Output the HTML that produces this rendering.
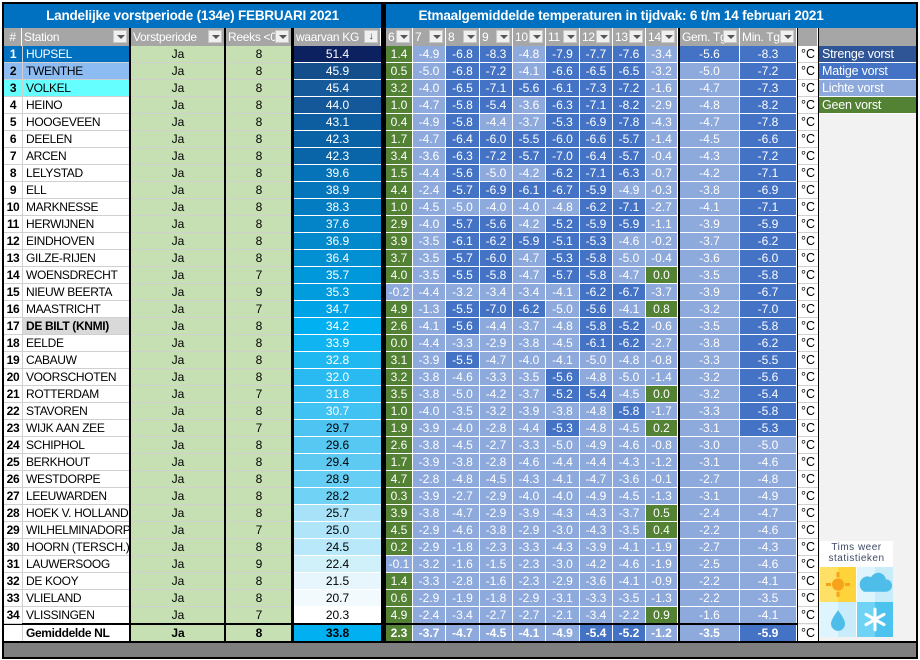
<!DOCTYPE html>
<html><head><meta charset="utf-8">
<style>
*{margin:0;padding:0;box-sizing:border-box}
body{width:920px;height:660px;background:#fff;position:relative;overflow:hidden;font-family:"Liberation Sans",Arial,sans-serif;font-size:12px}
.c{position:absolute;height:17px;line-height:16px;white-space:nowrap;overflow:hidden}
.h{position:absolute;top:28px;height:18px;line-height:18px;background:#a6a6a6;color:#fff;font-size:12px;letter-spacing:-0.3px;padding-left:2px;border-right:1px solid #fff;overflow:hidden;white-space:nowrap}
.dd{position:absolute;top:2px;right:2px;width:14px;height:13px;background:#f0f0f0;border:1px solid #c8c8c8}
.dd:after{content:"";position:absolute;left:3px;top:4px;border-left:4px solid transparent;border-right:4px solid transparent;border-top:4px solid #555}
</style></head><body>
<div style="position:absolute;left:2px;top:2px;width:916px;height:657px;border:2px solid #000;background:#000"></div>
<div style="position:absolute;left:4px;top:4px;width:377px;height:24px;background:#0070c0;color:#fff;font-weight:bold;font-size:13.5px;letter-spacing:-0.2px;text-align:center;line-height:24px">Landelijke vorstperiode (134e) FEBRUARI 2021</div>
<div style="position:absolute;left:386px;top:4px;width:530px;height:24px;background:#0070c0;color:#fff;font-weight:bold;font-size:13.5px;letter-spacing:-0.2px;text-align:center;line-height:24px;padding-right:60px">Etmaalgemiddelde temperaturen in tijdvak: 6 t/m 14 februari 2021</div>
<div style="position:absolute;left:798px;top:46px;width:118px;height:597px;background:#f2f2f2"></div>
<div style="position:absolute;left:4px;top:643px;width:912px;height:14px;background:#7f7f7f"></div>
<div id="g"></div>
<div style="position:absolute;left:820px;top:541px;width:73px;height:96px;background:#fff">
 <div style="color:#3d4a66;font-size:10px;line-height:11px;text-align:center;letter-spacing:0.5px;padding-top:1px">Tims weer<br>statistieken</div>
 <svg width="73" height="70" style="position:absolute;left:0;top:26px" viewBox="0 0 73 68" preserveAspectRatio="none">
  <rect x="0" y="0" width="36" height="34" fill="#ffe066"/><rect x="18" y="0" width="18" height="34" fill="#ffd43a"/>
  <g fill="#f7a21b"><circle cx="18" cy="17" r="6"/><rect x="16.5" y="5" width="3" height="5"/><rect x="16.5" y="24" width="3" height="5"/><rect x="6" y="15.5" width="5" height="3"/><rect x="25" y="15.5" width="5" height="3"/></g>
  <rect x="37" y="0" width="36" height="34" fill="#dff5fd"/><rect x="55" y="0" width="18" height="34" fill="#c9ecfb"/>
  <path d="M44 24 h22 a6 6 0 0 0 0-12 a8 8 0 0 0-15-2 a6 6 0 0 0-7 14z" fill="#4ebde9"/>
  <rect x="0" y="34" width="36" height="34" fill="#dff5fd"/><rect x="18" y="34" width="18" height="34" fill="#c9ecfb"/>
  <path d="M18 42 q-7 9-7 13 a7 7 0 0 0 14 0 q0-4-7-13z" fill="#4ebde9"/>
  <rect x="37" y="34" width="36" height="34" fill="#6ed3f5"/><rect x="55" y="34" width="18" height="34" fill="#4cc3ee"/>
  <g stroke="#fff" stroke-width="3" stroke-linecap="round"><line x1="55" y1="41" x2="55" y2="61"/><line x1="46" y1="46" x2="64" y2="56"/><line x1="46" y1="56" x2="64" y2="46"/></g>
 </svg>
</div>
<script>
var st=["HUPSEL","TWENTHE","VOLKEL","HEINO","HOOGEVEEN","DEELEN","ARCEN","LELYSTAD","ELL","MARKNESSE","HERWIJNEN","EINDHOVEN","GILZE-RIJEN","WOENSDRECHT","NIEUW BEERTA","MAASTRICHT","DE BILT (KNMI)","EELDE","CABAUW","VOORSCHOTEN","ROTTERDAM","STAVOREN","WIJK AAN ZEE","SCHIPHOL","BERKHOUT","WESTDORPE","LEEUWARDEN","HOEK V. HOLLAND","WILHELMINADORP","HOORN (TERSCH.)","LAUWERSOOG","DE KOOY","VLIELAND","VLISSINGEN"];
var rk=[8,8,8,8,8,8,8,8,8,8,8,8,8,7,9,7,8,8,8,8,7,8,7,8,8,8,8,8,7,8,9,8,8,7];
var kg=["51.4","45.9","45.4","44.0","43.1","42.3","42.3","39.6","38.9","38.3","37.6","36.9","36.4","35.7","35.3","34.7","34.2","33.9","32.8","32.0","31.8","30.7","29.7","29.6","29.4","28.9","28.2","25.7","25.0","24.5","22.4","21.5","20.7","20.3"];
var kc=["#0c2260","#144f8c","#155a9a","#14589a","#0c5ea0","#0a62a6","#0a64a8","#0672b8","#0676bc","#047cc2","#0484c8","#0289cc","#0290d2","#0098da","#009cde","#00a4e6","#00b0f0","#10b4f0","#20b8f0","#28baf0","#30bcf0","#40c2f2","#4ec4f2","#56c8f2","#5ecaf2","#66cef4","#70d2f4","#a8e2f8","#b0e4f8","#b8e8fa","#d0f0fa","#e6f6fc","#f2fafe","#ffffff"];
var T=`1.4 -4.9 -6.8 -8.3 -4.8 -7.9 -7.7 -7.6 -3.4 -5.6 -8.3
0.5 -5.0 -6.8 -7.2 -4.1 -6.6 -6.5 -6.5 -3.2 -5.0 -7.2
3.2 -4.0 -6.5 -7.1 -5.6 -6.1 -7.3 -7.2 -1.6 -4.7 -7.3
1.0 -4.7 -5.8 -5.4 -3.6 -6.3 -7.1 -8.2 -2.9 -4.8 -8.2
0.4 -4.9 -5.8 -4.4 -3.7 -5.3 -6.9 -7.8 -4.3 -4.7 -7.8
1.7 -4.7 -6.4 -6.0 -5.5 -6.0 -6.6 -5.7 -1.4 -4.5 -6.6
3.4 -3.6 -6.3 -7.2 -5.7 -7.0 -6.4 -5.7 -0.4 -4.3 -7.2
1.5 -4.4 -5.6 -5.0 -4.2 -6.2 -7.1 -6.3 -0.7 -4.2 -7.1
4.4 -2.4 -5.7 -6.9 -6.1 -6.7 -5.9 -4.9 -0.3 -3.8 -6.9
1.0 -4.5 -5.0 -4.0 -4.0 -4.8 -6.2 -7.1 -2.7 -4.1 -7.1
2.9 -4.0 -5.7 -5.6 -4.2 -5.2 -5.9 -5.9 -1.1 -3.9 -5.9
3.9 -3.5 -6.1 -6.2 -5.9 -5.1 -5.3 -4.6 -0.2 -3.7 -6.2
3.7 -3.5 -5.7 -6.0 -4.7 -5.3 -5.8 -5.0 -0.4 -3.6 -6.0
4.0 -3.5 -5.5 -5.8 -4.7 -5.7 -5.8 -4.7 0.0 -3.5 -5.8
-0.2 -4.4 -3.2 -3.4 -3.4 -4.1 -6.2 -6.7 -3.7 -3.9 -6.7
4.9 -1.3 -5.5 -7.0 -6.2 -5.0 -5.6 -4.1 0.8 -3.2 -7.0
2.6 -4.1 -5.6 -4.4 -3.7 -4.8 -5.8 -5.2 -0.6 -3.5 -5.8
0.0 -4.4 -3.3 -2.9 -3.8 -4.5 -6.1 -6.2 -2.7 -3.8 -6.2
3.1 -3.9 -5.5 -4.7 -4.0 -4.1 -5.0 -4.8 -0.8 -3.3 -5.5
3.2 -3.8 -4.6 -3.3 -3.5 -5.6 -4.8 -5.0 -1.4 -3.2 -5.6
3.5 -3.8 -5.0 -4.2 -3.7 -5.2 -5.4 -4.5 0.0 -3.2 -5.4
1.0 -4.0 -3.5 -3.2 -3.9 -3.8 -4.8 -5.8 -1.7 -3.3 -5.8
1.9 -3.9 -4.0 -2.8 -4.4 -5.3 -4.8 -4.5 0.2 -3.1 -5.3
2.6 -3.8 -4.5 -2.7 -3.3 -5.0 -4.9 -4.6 -0.8 -3.0 -5.0
1.7 -3.9 -3.8 -2.8 -4.6 -4.4 -4.4 -4.3 -1.2 -3.1 -4.6
4.7 -2.8 -4.8 -4.5 -4.3 -4.1 -4.7 -3.6 -0.1 -2.7 -4.8
0.3 -3.9 -2.7 -2.9 -4.0 -4.0 -4.9 -4.5 -1.3 -3.1 -4.9
3.9 -3.8 -4.7 -2.9 -3.9 -4.3 -4.3 -3.7 0.5 -2.4 -4.7
4.5 -2.9 -4.6 -3.8 -2.9 -3.0 -4.3 -3.5 0.4 -2.2 -4.6
0.2 -2.9 -1.8 -2.3 -3.3 -4.3 -3.9 -4.1 -1.9 -2.7 -4.3
-0.1 -3.2 -1.6 -1.5 -2.3 -3.0 -4.2 -4.6 -1.9 -2.5 -4.6
1.4 -3.3 -2.8 -1.6 -2.3 -2.9 -3.6 -4.1 -0.9 -2.2 -4.1
0.6 -2.9 -1.9 -1.8 -2.9 -3.1 -3.3 -3.5 -1.3 -2.2 -3.5
4.9 -2.4 -3.4 -2.7 -2.7 -2.1 -3.4 -2.2 0.9 -1.6 -4.1
2.3 -3.7 -4.7 -4.5 -4.1 -4.9 -5.4 -5.2 -1.2 -3.5 -5.9`.split("\n").map(function(l){return l.trim().split(" ")});
var cx=[[386,27],[413,33],[446,34],[480,33],[513,33],[546,34],[580,33],[613,33],[646,32],[680,60],[740,57]];
var h="";
function cell(x,y,w,hh,st,txt){h+='<div class="c" style="left:'+x+'px;top:'+y+'px;width:'+w+'px;height:'+hh+'px;'+st+'">'+txt+'</div>';}
var hd=[[4,18,"#",0],[22,108,"Station",1],[131,94,"Vorstperiode",1],[226,66,"Reeks &lt;0",1],[294,87,"waarvan KG",2]];
hd.forEach(function(a){h+='<div class="h" style="left:'+a[0]+'px;width:'+a[1]+'px;'+(a[3]==0?'text-align:center;padding:0;':'')+'">'+a[2]+(a[3]==1?'<span class="dd"></span>':a[3]==2?'<span style="position:absolute;top:2px;right:2px;width:14px;height:13px;background:#f0f0f0;border:1px solid #c8c8c8;font-size:10px;line-height:11px;color:#333;text-align:center">&#8595;</span>':'')+'</div>';});
var hn=["6","7","8","9","10","11","12","13","14","Gem. Tg","Min. Tg"];
cx.forEach(function(c,i){h+='<div class="h" style="left:'+c[0]+'px;width:'+c[1]+'px">'+hn[i]+'<span class="dd"></span></div>';});
h+='<div class="h" style="left:798px;width:20px"></div><div class="h" style="left:819px;width:97px;border:none"></div>';
function tc(v){v=parseFloat(v);return v>=0?"#548235":(v>=-5.0?"#8ea9db":"#4472c4");}
for(var i=0;i<35;i++){
 var y=46+17*i, av=i==34, hh=17;
 if(av){y=625;hh=18;}
 var fb=av?"font-weight:bold;":"";
 var nb="#fff",nc="#000",sb="#fff",sc="#000";
 if(i==0){nb=sb="#0070c0";nc=sc="#fff";}
 if(i==1){nb=sb="#8dbcf3";}
 if(i==2){nb=sb="#66ffff";}
 if(i==16){sb="#d9d9d9";}
 var bl="border-bottom:1px solid #d0d0d0;";
 cell(4,y,18,hh,"background:"+nb+";color:"+nc+";font-weight:bold;text-align:center;letter-spacing:-0.3px;"+bl,av?"":(i+1));
 cell(22,y,108,hh,"background:"+sb+";color:"+sc+";padding-left:3px;font-size:12px;letter-spacing:-0.35px;border-left:1px solid #d0d0d0;"+bl+(i==16||av?"font-weight:bold;":""),av?"Gemiddelde NL":st[i]);
 cell(131,y,94,hh,"background:#c6e0b4;text-align:center;"+fb+bl,"Ja");
 cell(226,y,66,hh,"background:#c6e0b4;text-align:center;"+fb+bl,av?8:rk[i]);
 var k=av?"#00b0f0":kc[i], kv=av?"33.8":kg[i], kt=(!av&&parseFloat(kv)>=30.5)?"#fff":"#000";
 cell(294,y,87,hh,"background:"+k+";color:"+kt+";text-align:center;border-bottom:1px solid #fff;"+fb,kv);
 for(var j=0;j<11;j++){cell(cx[j][0],y,cx[j][1],hh,"color:#fff;text-align:center;background:"+tc(T[i][j])+";border-right:1px solid #fff;border-bottom:1px solid #fff;"+fb,T[i][j]);}
 cell(798,y,20,hh,"background:#fff;text-align:center;border-bottom:1px solid #d0d0d0;font-size:12.5px","&deg;C");
}
var lg=[["#2f5597","Strenge vorst"],["#4472c4","Matige vorst"],["#8ea9db","Lichte vorst"],["#548235","Geen vorst"]];
lg.forEach(function(a,i){cell(819,46+17*i,97,17,"background:"+a[0]+";color:#fff;padding-left:3px;font-size:12.5px;letter-spacing:-0.2px;border-bottom:1px solid #fff",a[1]);});
h+='<div style="position:absolute;left:129px;top:28px;width:2px;height:615px;background:#000"></div>';
h+='<div style="position:absolute;left:224px;top:28px;width:2px;height:615px;background:#000"></div>';
h+='<div style="position:absolute;left:291px;top:28px;width:3px;height:615px;background:#000"></div>';
h+='<div style="position:absolute;left:381px;top:4px;width:5px;height:639px;background:#000"></div>';
h+='<div style="position:absolute;left:678px;top:46px;width:2px;height:597px;background:#000"></div>';
h+='<div style="position:absolute;left:797px;top:46px;width:1px;height:597px;background:#000"></div>';
h+='<div style="position:absolute;left:818px;top:28px;width:1px;height:615px;background:#000"></div>';
h+='<div style="position:absolute;left:22px;top:623px;width:776px;height:2px;background:#000"></div>';
h+='<div style="position:absolute;left:4px;top:641px;width:914px;height:2px;background:#000"></div>';
document.getElementById("g").innerHTML=h;
</script>
</body></html>
